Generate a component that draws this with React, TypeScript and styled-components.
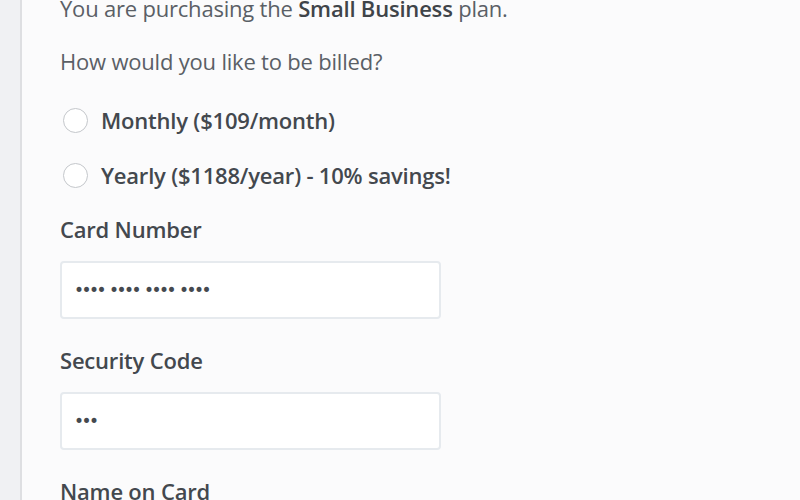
import React from "react";
import styled, { createGlobalStyle } from "styled-components";

const GlobalStyle = createGlobalStyle`
  html, body {
    margin: 0;
    padding: 0;
    background: #fbfbfc;
  }
  body {
    font-family: "Open Sans", "Liberation Sans", sans-serif;
    color: #555a60;
  }
`;

const Page = styled.div`
  display: flex;
  height: 500px;
  overflow: hidden;
`;

const Rail = styled.div`
  width: 20px;
  flex: none;
  background: #f0f1f3;
  border-right: 2px solid #dedfe2;
`;

const Main = styled.main`
  flex: 1;
  display: flex;
  flex-direction: column;
  padding-left: 38px;
  margin-top: -8px;
`;

const Text = styled.p`
  margin: 0;
  font-size: 22px;
  letter-spacing: -0.2px;
  line-height: 32px;
  height: 32px;
  margin-bottom: 21px;
  color: #5a5f66;
  b {
    font-weight: 600;
    color: #3f4449;
  }
`;

const Options = styled.div`
  display: flex;
  flex-direction: column;
  gap: 23px;
  margin-top: 6px;
`;

const Option = styled.label`
  display: flex;
  align-items: center;
  gap: 13px;
  height: 32px;
  padding-left: 3px;
  font-size: 22px;
  letter-spacing: -0.2px;
  font-weight: 600;
  color: #43484e;
`;

const Radio = styled.span`
  width: 25px;
  height: 25px;
  flex: none;
  border-radius: 50%;
  border: 1.5px solid #c4c7cb;
  background: #fff;
  box-sizing: border-box;
`;

const Field = styled.div`
  display: flex;
  flex-direction: column;
`;

const Label = styled.div<{ $top: number }>`
  margin-top: ${(p) => p.$top}px;
  font-size: 22px;
  letter-spacing: -0.2px;
  font-weight: 600;
  line-height: 32px;
  color: #43484e;
`;

const Input = styled.div`
  margin-top: 16px;
  width: 381px;
  height: 58px;
  box-sizing: border-box;
  background: #fff;
  border: 2px solid #e6eaee;
  border-radius: 4px;
  padding-left: 12px;
  display: flex;
  align-items: center;
  font-family: "DejaVu Sans", sans-serif;
  font-size: 17px;
  letter-spacing: -2.5px;
  word-spacing: 2px;
  color: #45494f;
`;

export default function App() {
  return (
    <>
      <GlobalStyle />
      <Page>
        <Rail />
        <Main>
          <Text>
            You are purchasing the <b>Small Business</b> plan.
          </Text>
          <Text>How would you like to be billed?</Text>
          <Options>
            <Option>
              <Radio />
              Monthly ($109/month)
            </Option>
            <Option>
              <Radio />
              Yearly ($1188/year) - 10% savings!
            </Option>
          </Options>
          <Field>
            <Label $top={22}>Card Number</Label>
            <Input>•••• •••• •••• ••••</Input>
          </Field>
          <Field>
            <Label $top={25}>Security Code</Label>
            <Input>•••</Input>
          </Field>
          <Field>
            <Label $top={25}>Name on Card</Label>
          </Field>
        </Main>
      </Page>
    </>
  );
}
